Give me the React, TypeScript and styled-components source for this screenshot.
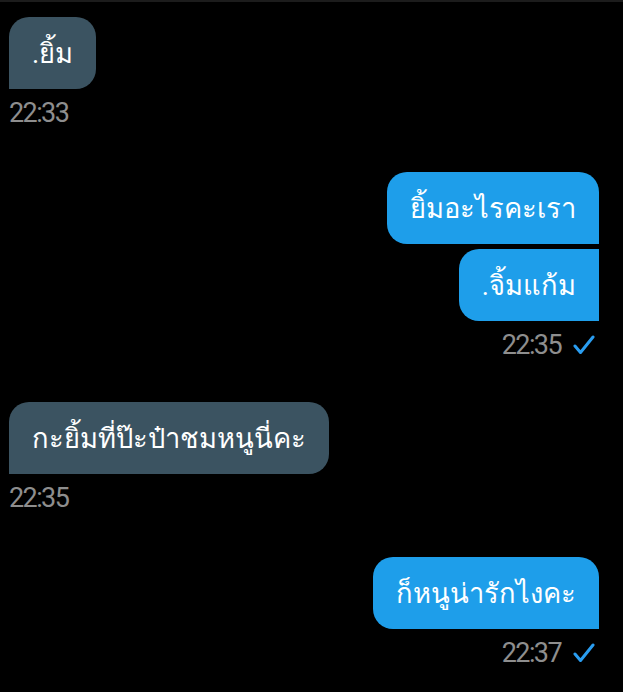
import React from "react";
import styled, { createGlobalStyle } from "styled-components";

const Global = createGlobalStyle`
  html, body { margin: 0; padding: 0; background: #000; }
  body { font-family: Roboto, "Noto Sans", "DejaVu Sans", sans-serif; }
`;

const Screen = styled.div`
  width: 623px;
  height: 692px;
  background: #000;
  border-top: 2px solid #1c1c1c;
  box-sizing: border-box;
  padding: 15px 24px 0 9px;
  display: flex;
  flex-direction: column;
  overflow: hidden;
`;

const Group = styled.div<{ $out?: boolean; $gap: number }>`
  display: flex;
  flex-direction: column;
  align-items: ${(p) => (p.$out ? "flex-end" : "flex-start")};
  margin-bottom: ${(p) => p.$gap}px;
`;

const Bubble = styled.div<{ $out?: boolean; $first?: boolean }>`
  box-sizing: border-box;
  height: 72px;
  display: flex;
  align-items: center;
  padding: 0 23px;
  font-size: 27.3px;
  color: #fff;
  background: ${(p) => (p.$out ? "#1e9eea" : "#3b5361")};
  border-radius: ${(p) =>
    p.$out
      ? p.$first
        ? "20px 20px 0 20px"
        : "20px 0 0 20px"
      : "20px 20px 20px 0"};
  & + & {
    margin-top: 5px;
  }
`;

const Meta = styled.div`
  display: flex;
  align-items: center;
  gap: 12px;
  margin-top: 8px;
  margin-right: 4px;
  height: 32px;
  font-size: 27px;
  letter-spacing: -1.6px;
  color: #8e8e8e;
`;

const Check = () => (
  <svg width="22" height="20" viewBox="0 0 22 20" fill="none">
    <path d="M2 11 L7.5 17.5 L20 2" stroke="#2a9df0" strokeWidth="3" strokeLinecap="round" strokeLinejoin="round" />
  </svg>
);

export default function App() {
  return (
    <>
      <Global />
      <Screen>
        <Group $gap={43}>
          <Bubble>.ยิ้ม</Bubble>
          <Meta>22:33</Meta>
        </Group>
        <Group $out $gap={41}>
          <Bubble $out $first>ยิ้มอะไรคะเรา</Bubble>
          <Bubble $out>.จิ้มแก้ม</Bubble>
          <Meta>22:35<Check /></Meta>
        </Group>
        <Group $gap={43}>
          <Bubble>กะยิ้มที่ป๊ะป๋าชมหนูนี่คะ</Bubble>
          <Meta>22:35</Meta>
        </Group>
        <Group $out $gap={0}>
          <Bubble $out $first>ก็หนูน่ารักไงคะ</Bubble>
          <Meta>22:37<Check /></Meta>
        </Group>
      </Screen>
    </>
  );
}
